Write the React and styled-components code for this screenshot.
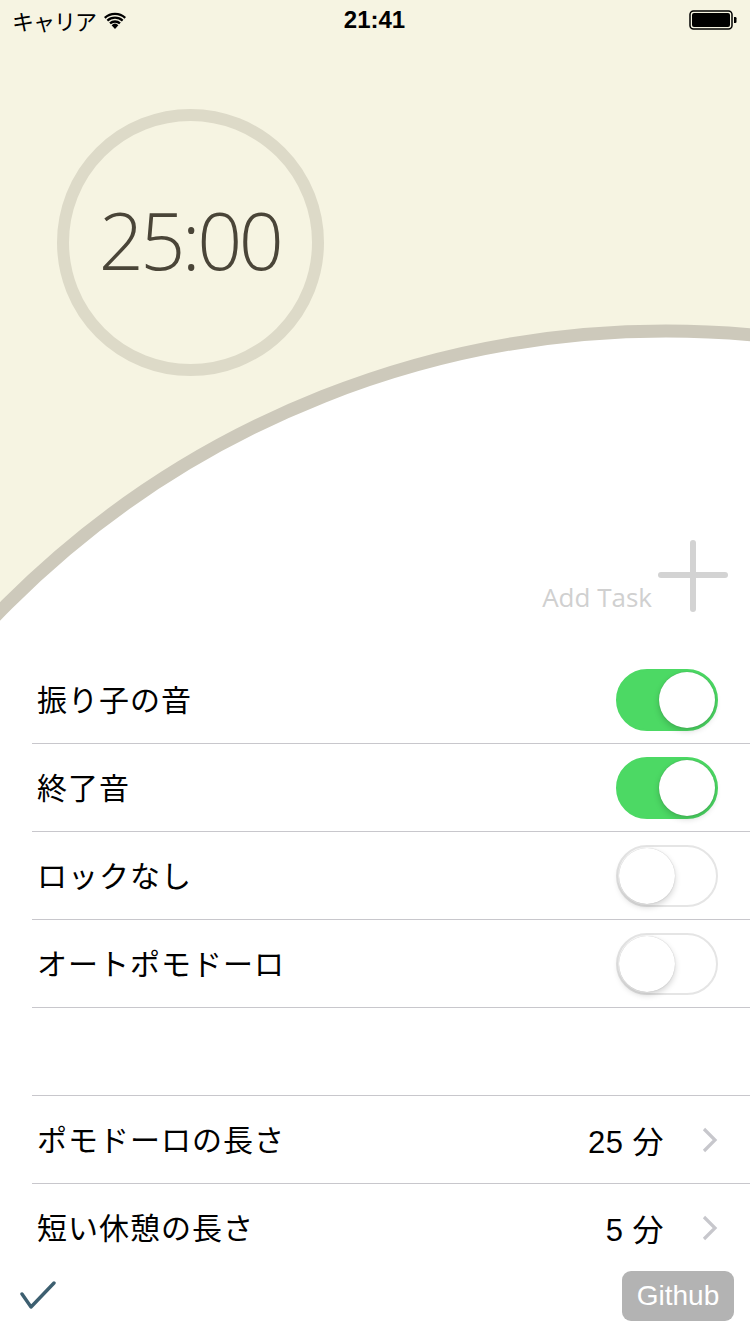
/* Basic */
import React from "react";
/* Styles */
import styled, { createGlobalStyle, css } from "styled-components";

const GlobalStyle = createGlobalStyle`
    html, body {
        margin: 0;
        padding: 0;
        background: #ffffff;
    }
    body {
        font-family: "Liberation Sans", "Noto Sans CJK JP", sans-serif;
        -webkit-font-smoothing: antialiased;
    }
`;

const Page = styled.div`
    width: 750px;
    height: 1334px;
    display: flex;
    flex-direction: column;
    overflow: hidden;
    background: #ffffff;
`;

/* Header */
const Header = styled.div`
    position: relative;
    height: 625px;
    flex-shrink: 0;
    background: #f6f4e2;
    display: flex;
    flex-direction: column;
    overflow: hidden;
`;
const CurveLayer = styled.svg`
    position: absolute;
    left: 0;
    top: 0;
`;
const StatusBar = styled.div`
    position: relative;
    height: 40px;
    display: grid;
    grid-template-columns: 1fr auto 1fr;
    align-items: center;
    padding: 0 13px 0 12px;
    color: #000000;
`;
const Carrier = styled.div`
    display: flex;
    align-items: center;
    gap: 8px;
    font-family: "Noto Sans CJK JP", sans-serif;
    font-size: 22px;
    letter-spacing: -1px;
`;
const Clock = styled.div`
    font-family: "Liberation Sans", sans-serif;
    font-weight: 700;
    font-size: 24px;
`;
const Battery = styled.div`
    justify-self: end;
    display: flex;
    align-items: center;
`;
const TimerRing = styled.div`
    position: relative;
    margin: 69px 0 0 57px;
    width: 243px;
    height: 243px;
    border: 12px solid #dddac8;
    border-radius: 50%;
    display: flex;
    align-items: center;
    justify-content: center;
`;
const TimerText = styled.div`
    font-family: "Open Sans", sans-serif;
    font-weight: 300;
    font-size: 79px;
    letter-spacing: -3.5px;
    color: #4a4538;
    margin: -6px 0 0 -2px;
`;
const AddTaskRow = styled.div`
    position: relative;
    margin-top: auto;
    margin-bottom: 13px;
    padding-right: 22px;
    display: flex;
    justify-content: flex-end;
    align-items: flex-end;
    gap: 6px;
`;
const AddTaskLabel = styled.span`
    font-family: "Open Sans", sans-serif;
    font-size: 26px;
    color: #d0d0d0;
    margin-bottom: -3px;
`;

/* Settings list */
const List = styled.div`
    flex: 1;
    overflow: hidden;
    padding-top: 31px;
`;
const Row = styled.div`
    height: 87px;
    margin-left: 32px;
    padding: 0 32px 0 5px;
    display: flex;
    align-items: center;
    border-bottom: 1px solid #c8c7cc;
    ${props => props.$top && css`
        border-top: 1px solid #c8c7cc;
    `}
`;
const Label = styled.span`
    flex: 1;
    font-family: "Noto Sans CJK JP", sans-serif;
    font-size: 30px;
    color: #000000;
    letter-spacing: 1px;
    margin-top: -3px;
`;
const Value = styled.span`
    font-family: "Liberation Sans", "Noto Sans CJK JP", sans-serif;
    font-size: 31px;
    color: #000000;
    margin-right: 38px;
    letter-spacing: 0.5px;
`;
const Spacer = styled.div`
    height: 87px;
`;

const Track = styled.div`
    position: relative;
    width: 102px;
    height: 62px;
    box-sizing: border-box;
    border-radius: 31px;
    border: 2px solid ${props => props.$on ? "#4cd964" : "#e5e5e5"};
    background: ${props => props.$on ? "#4cd964" : "#ffffff"};
`;
const Thumb = styled.div`
    position: absolute;
    top: 1px;
    left: ${props => props.$on ? "41px" : "1px"};
    width: 56px;
    height: 56px;
    border-radius: 50%;
    background: #ffffff;
    box-shadow: 0 3px 6px rgba(0, 0, 0, 0.18), 0 0 1px rgba(0, 0, 0, 0.25);
`;

/* Footer */
const Footer = styled.div`
    height: 68px;
    flex-shrink: 0;
    background: #ffffff;
    display: flex;
    align-items: center;
    justify-content: space-between;
    padding: 0 16px 8px 20px;
    box-sizing: border-box;
`;
const GithubButton = styled.button`
    width: 112px;
    height: 50px;
    border: none;
    border-radius: 9px;
    background: #b3b3b3;
    color: #ffffff;
    font-family: "Liberation Sans", sans-serif;
    font-size: 28px;
    padding: 0;
`;

const Toggle = ({ on }) => (
    <Track $on={on}>
        <Thumb $on={on} />
    </Track>
);

const WifiIcon = () => (
    <svg width="22" height="17" viewBox="0 0 22 17">
        <path d="M11 17 L7.6 13.2 A5 5 0 0 1 14.4 13.2 Z" fill="#000" />
        <path d="M5.2 10.6 A8.6 8.6 0 0 1 16.8 10.6 L15.2 12.3 A6.3 6.3 0 0 0 6.8 12.3 Z" fill="#000" />
        <path d="M2.6 7.8 A12.4 12.4 0 0 1 19.4 7.8 L17.9 9.5 A10.2 10.2 0 0 0 4.1 9.5 Z" fill="#000" />
        <path d="M0 5 A16.2 16.2 0 0 1 22 5 L20.5 6.7 A14 14 0 0 0 1.5 6.7 Z" fill="#000" />
    </svg>
);

const BatteryIcon = () => (
    <svg width="48" height="20" viewBox="0 0 48 20">
        <rect x="1" y="1" width="42" height="18" rx="3.5" fill="none" stroke="#000" strokeWidth="1.5" />
        <rect x="3" y="3" width="38" height="14" rx="2" fill="#000" />
        <path d="M45 7 h1.2 a1.3 1.3 0 0 1 1.3 1.3 v3.4 a1.3 1.3 0 0 1 -1.3 1.3 H45 Z" fill="#000" />
    </svg>
);

const PlusIcon = () => (
    <svg width="70" height="72" viewBox="0 0 70 72">
        <line x1="35" y1="3" x2="35" y2="69" stroke="#d3d3d3" strokeWidth="6" strokeLinecap="round" />
        <line x1="3" y1="35" x2="67" y2="35" stroke="#d3d3d3" strokeWidth="6" strokeLinecap="round" />
    </svg>
);

const Chevron = () => (
    <svg width="16" height="26" viewBox="0 0 16 26">
        <polyline points="2,2 13,13 2,24" fill="none" stroke="#c7c7cc" strokeWidth="3.2" />
    </svg>
);

const CheckIcon = () => (
    <svg width="36" height="30" viewBox="0 0 36 30">
        <polyline points="2,13 11,26 34,2" fill="none" stroke="#3d5f70" strokeWidth="3.4" strokeLinecap="round" strokeLinejoin="round" />
    </svg>
);

const switches = [
    { label: "振り子の音", on: true },
    { label: "終了音", on: true },
    { label: "ロックなし", on: false },
    { label: "オートポモドーロ", on: false },
];

const durations = [
    { label: "ポモドーロの長さ", value: "25 分" },
    { label: "短い休憩の長さ", value: "5 分" },
];

const App = () => {
    return (
        <Page>
            <GlobalStyle />
            <Header>
                <CurveLayer width="750" height="625" viewBox="0 0 750 625">
                    <circle cx="666" cy="1262" r="931" fill="#ffffff" stroke="#cdc9bb" strokeWidth="13" />
                </CurveLayer>
                <StatusBar>
                    <Carrier>
                        キャリア
                        <WifiIcon />
                    </Carrier>
                    <Clock>21:41</Clock>
                    <Battery>
                        <BatteryIcon />
                    </Battery>
                </StatusBar>
                <TimerRing>
                    <TimerText>25:00</TimerText>
                </TimerRing>
                <AddTaskRow>
                    <AddTaskLabel>Add Task</AddTaskLabel>
                    <PlusIcon />
                </AddTaskRow>
            </Header>
            <List>
                {switches.map(item => (
                    <Row key={item.label}>
                        <Label>{item.label}</Label>
                        <Toggle on={item.on} />
                    </Row>
                ))}
                <Spacer />
                {durations.map((item, i) => (
                    <Row key={item.label} $top={i === 0}>
                        <Label>{item.label}</Label>
                        <Value>{item.value}</Value>
                        <Chevron />
                    </Row>
                ))}
            </List>
            <Footer>
                <CheckIcon />
                <GithubButton>Github</GithubButton>
            </Footer>
        </Page>
    );
};

export default App;
